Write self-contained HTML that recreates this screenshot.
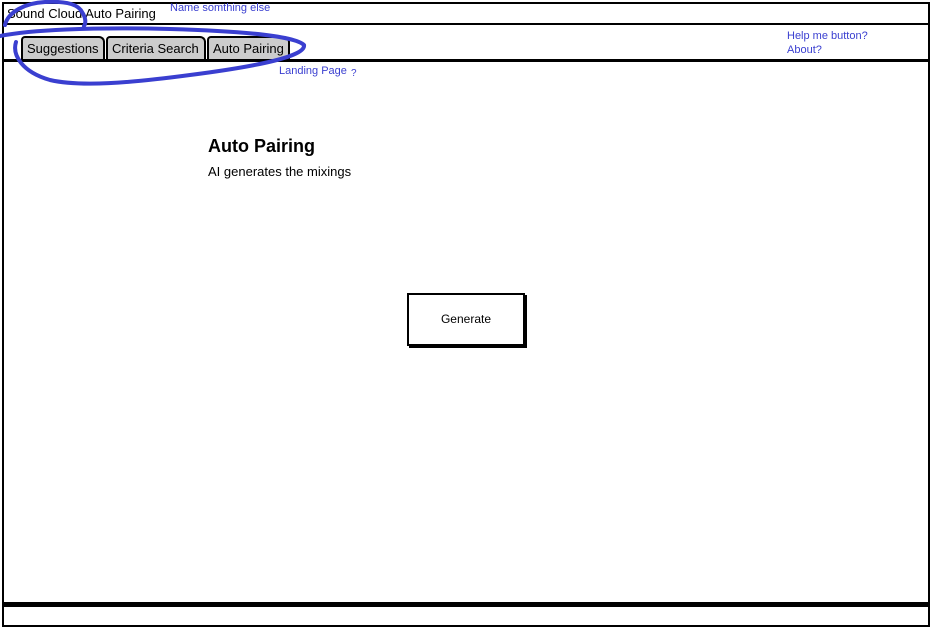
<!DOCTYPE html>
<html><head><meta charset="utf-8"><style>
*{margin:0;padding:0;box-sizing:border-box}
body{width:931px;height:629px;background:#fff;position:relative;overflow:hidden;font-family:"Liberation Sans",sans-serif;color:#000}
.a{position:absolute}
.blue{color:#3a3fd0;font-size:11px}
.tab{position:absolute;top:36px;height:23px;background:#ccc;border:2px solid #000;border-bottom:none;border-radius:4px 6px 0 0;font-size:13px;line-height:22px;padding-left:4px}
</style></head><body>
<div class="a" style="left:2px;top:2px;width:928px;height:602px;border:2px solid #000"></div>
<div class="a" style="left:2px;top:23px;width:928px;height:2px;background:#000"></div>
<div class="a" style="left:2px;top:59px;width:928px;height:3px;background:#000"></div>
<div class="a" style="left:2px;top:604px;width:928px;height:23px;border:2px solid #000;border-top:3px solid #000"></div>
<div class="a" style="left:7px;top:6px;font-size:13px">Sound Cloud Auto Pairing</div>
<div class="a blue" style="left:170px;top:2px">Name somthing else</div>
<div class="tab" style="left:21px;width:84px">Suggestions</div>
<div class="tab" style="left:106px;width:100px">Criteria Search</div>
<div class="tab" style="left:207px;width:83px">Auto Pairing</div>
<div class="a blue" style="left:787px;top:30px">Help me button?</div>
<div class="a blue" style="left:787px;top:44px">About?</div>
<div class="a blue" style="left:279px;top:65px">Landing Page</div>
<div class="a blue" style="left:351px;top:68px;font-size:10px">?</div>
<div class="a" style="left:208px;top:136px;font-size:18px;font-weight:bold">Auto Pairing</div>
<div class="a" style="left:208px;top:164px;font-size:13px">AI generates the mixings</div>
<div class="a" style="left:407px;top:293px;width:118px;height:53px;border:2px solid #000;box-shadow:2px 2px 0 #000;font-size:12px;text-align:center;line-height:49px">Generate</div>
<svg class="a" style="left:0;top:0" width="931" height="120">
<path d="M5,25 C8,12 25,3 45,2 C65,1 78,4 82,12 C86,18 86,23 84,26" fill="none" stroke="#3a3fd0" stroke-width="4" stroke-linecap="round"/>
<path d="M0,36 C30,30 90,27 170,29 C240,31 295,36 304,45 C306,56 260,66 190,75 C130,83 80,87 50,80 C22,72 12,55 16,42" fill="none" stroke="#3a3fd0" stroke-width="4" stroke-linecap="round"/>
</svg>
</body></html>
